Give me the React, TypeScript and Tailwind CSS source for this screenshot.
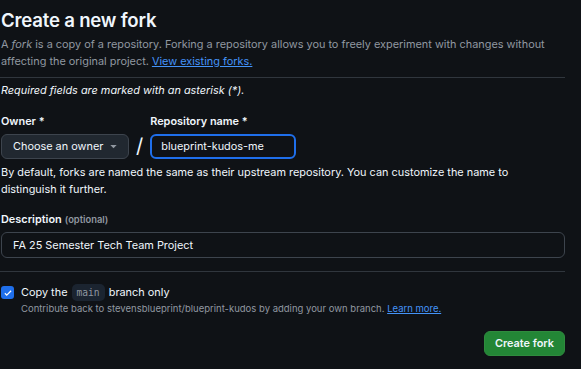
import React from "react";

export default function App() {
  return (
    <div className="min-h-[369px] w-[581px] bg-[#0f1216] text-[#f0f6fc]" style={{ fontFamily: "Inter, 'Noto Sans', sans-serif" }}>
      <div className="w-[565px] pl-[1px] pt-[8px]">
        <h1 className="text-[18.6px] font-semibold leading-[24px] tracking-[-0.2px]">Create a new fork</h1>
        <p className="mt-[4px] text-[10.9px] leading-[17px] text-[#9198a1]">
          A <em>fork</em> is a copy of a repository. Forking a repository allows you to freely experiment with changes without
          affecting the original project. <a className="text-[#4493f8] underline">View existing forks.</a>
        </p>
        <div className="mt-[7px] -ml-[1px] h-px bg-[#30363d]" />
        <p className="mt-[4px] text-[10.9px] italic leading-[17px]">Required fields are marked with an asterisk (*).</p>

        <div className="mt-[14px] flex items-end">
          <div className="flex flex-col">
            <span className="text-[10.9px] font-semibold leading-[17px]">Owner *</span>
            <div className="mt-[4px] flex h-[25px] w-[128px] items-center justify-between whitespace-nowrap rounded-[6px] border border-[#3d444d] bg-[#212830] pl-[11px] pr-[11px] text-[10.9px]">
              <span>Choose an owner</span>
              <svg width="7" height="4" viewBox="0 0 8 5"><path d="M0 0h8L4 4z" fill="#9198a1" /></svg>
            </div>
          </div>
          <span className="mx-[7px] mb-[1px] text-[20px] leading-[24px]">/</span>
          <div className="flex flex-col">
            <span className="text-[10.9px] font-semibold leading-[17px]">Repository name *</span>
            <div className="mt-[4px] flex h-[25px] w-[146px] items-center whitespace-nowrap rounded-[6px] border-2 border-[#1f6feb] bg-[#0f1216] pl-[9px] text-[10.9px]">
              blueprint-kudos-me
            </div>
          </div>
        </div>
        <p className="mt-[5px] text-[10.9px] leading-[17px]">
          By default, forks are named the same as their upstream repository. You can customize the name to distinguish it further.
        </p>

        <div className="mt-[13px] flex items-baseline gap-[3px]">
          <span className="text-[10.9px] font-semibold leading-[17px]">Description</span>
          <span className="text-[9.4px] font-semibold text-[#9198a1]">(optional)</span>
        </div>
        <div className="mt-[4px] flex h-[26px] items-center rounded-[6px] border border-[#3d444d] pl-[11px] text-[10.9px]">
          FA 25 Semester Tech Team Project
        </div>
        <div className="mt-[13px] -ml-[1px] h-px bg-[#30363d]" />

        <div className="mt-[12px] flex items-center gap-[7px]">
          <div className="flex h-[13px] w-[13px] items-center justify-center rounded-[3px] bg-[#1f6feb]">
            <svg width="10" height="10" viewBox="0 0 16 16"><path d="M3 8.5l3 3 7-7" stroke="#fff" strokeWidth="2" fill="none" /></svg>
          </div>
          <span className="text-[10.9px] leading-[17px]">
            Copy the <code className="mx-[1px] rounded-[5px] bg-[#1b2430] px-[5px] py-[3px] text-[9.6px] text-[#9198a1]" style={{ fontFamily: "'DejaVu Sans Mono', monospace" }}>main</code> branch only
          </span>
        </div>
        <p className="mt-[1px] pl-[20px] text-[9.5px] leading-[14px] text-[#9198a1]">
          Contribute back to stevensblueprint/blueprint-kudos by adding your own branch. <a className="text-[#4493f8] underline">Learn more.</a>
        </p>

        <div className="mt-[15px] flex justify-end">
          <button className="h-[25px] w-[81px] rounded-[6px] border border-[#2f8b3e] bg-[#238636] text-[10.9px] font-semibold">Create fork</button>
        </div>
      </div>
    </div>
  );
}
